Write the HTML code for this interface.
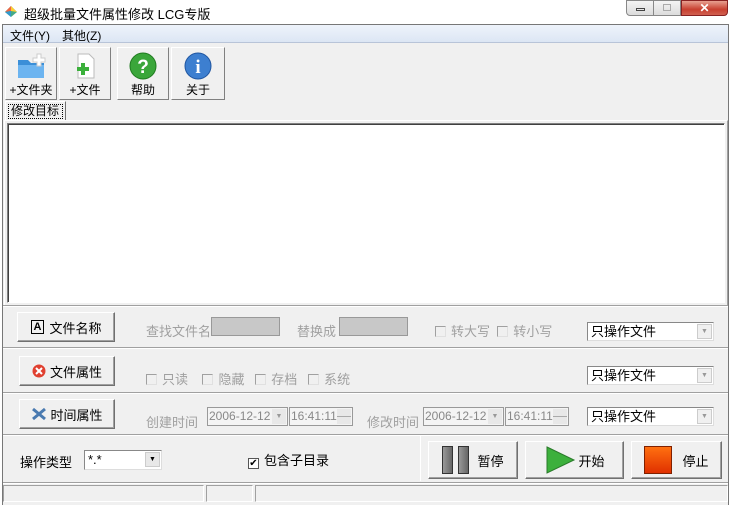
<!DOCTYPE html>
<html><head><meta charset="utf-8"><style>
*{margin:0;padding:0;box-sizing:border-box}
body{width:731px;height:505px;overflow:hidden;background:#fff;font-family:"Liberation Sans","Noto Sans CJK SC",sans-serif;font-size:12px;color:#000;position:relative}
.a{position:absolute;white-space:nowrap}
.btn{position:absolute;background:#f0f0f0;border:1px solid;border-color:#fff #707070 #707070 #fff;box-shadow:inset -1px -1px 0 #a0a0a0;display:flex;align-items:center;justify-content:center;font-size:13px;white-space:nowrap}
.g{color:#a0a0a0;font-size:13px}
.sep{position:absolute;left:3px;width:725px;height:2px;border-top:1px solid #a0a0a0;border-bottom:1px solid #fff}
.cb{display:inline-block;width:11px;height:11px;border:1px solid #a0a0a0;border-right-color:#e0e0e0;border-bottom-color:#e0e0e0;vertical-align:-1px;margin-right:5px;background:#f0f0f0}
.combo{position:absolute;height:19px;background:#fff;border:1px solid #888;border-right-color:#ddd;border-bottom-color:#ddd;font-size:13px;padding-left:3px;line-height:17px;white-space:nowrap}
.combo .dd{position:absolute;right:1px;top:1px;width:15px;height:15px;background:#f0f0f0;border:1px solid #ccc;font-size:7px;line-height:13px;text-align:center;color:#999}
.inp{position:absolute;height:19px;border:1px solid #999;background:#f4f4f4;font-size:12px;color:#888;line-height:17px;padding-left:1px;white-space:nowrap}
.tb{position:absolute;top:47px;height:53px;background:#f0f0f0;border:1px solid;border-color:#fff #808080 #808080 #fff;text-align:center;font-size:12px}
</style></head><body>
<div class="a" style="left:0;top:0;width:731px;height:25px;background:#fff"></div>
<svg class="a" style="left:3px;top:3px" width="16" height="16"><path d="M2 9 L8 3 L14 9 L8 14Z" fill="#4a8"/><path d="M2 9 L8 3 L8 8Z" fill="#e64"/><path d="M8 3 L14 9 L8 8Z" fill="#fc3"/><path d="M2 9 L8 14 L8 8Z" fill="#39c"/></svg>
<div class="a" style="left:24px;top:4px;font-size:13px">超级批量文件属性修改 LCG专版</div>
<div class="a" style="left:626px;top:0;width:28px;height:16px;border:1px solid #888;border-radius:0 0 0 4px;background:linear-gradient(#f4f4f4,#dcdcdc)"><div class="a" style="left:9px;top:7px;width:9px;height:3px;border:1px solid #444"></div></div>
<div class="a" style="left:654px;top:0;width:27px;height:16px;border:1px solid #888;border-left:none;background:linear-gradient(#f4f4f4,#dcdcdc)"><div class="a" style="left:9px;top:3px;width:8px;height:7px;border:1px solid #aaa"></div></div>
<div class="a" style="left:681px;top:0;width:47px;height:16px;border:1px solid #822;border-radius:0 0 4px 0;background:linear-gradient(#e8a090,#c84030 60%,#d06050);color:#fff;text-align:center;font-weight:bold;font-size:12px;line-height:14px">✕</div>
<div class="a" style="left:2px;top:24px;width:727px;height:481px;background:#f0f0f0;border:1px solid #777;border-bottom:none"></div>
<div class="a" style="left:3px;top:25px;width:725px;height:18px;background:linear-gradient(#eef3fb,#dce6f4);border-bottom:1px solid #b8c4d8"></div>
<div class="a" style="left:10px;top:27px;font-size:12px">文件(Y)</div>
<div class="a" style="left:62px;top:27px;font-size:12px">其他(Z)</div>
<div class="tb" style="left:5px;width:52px"><svg style="margin-top:4px" width="32" height="28"><path d="M3 8 h10 l3 3 h13 v15 h-26z" fill="#3b8fd8"/><path d="M3 13 h26 v13 h-26z" fill="#6cb4f0"/><path d="M22 2 h4 v4 h4 v4 h-4 v4 h-4 v-4 h-4 v-4 h4z" fill="#fff" stroke="#ccc"/></svg><div style="margin-top:-2px">+文件夹</div></div>
<div class="tb" style="left:59px;width:52px"><svg style="margin-top:4px" width="32" height="28"><path d="M9 2 h11 l5 5 v19 h-16z" fill="#fff" stroke="#bbb"/><path d="M12 11 h4 v4 h4 v4 h-4 v4 h-4 v-4 h-4 v-4 h4z" fill="#3bb03b"/></svg><div style="margin-top:-2px">+文件</div></div>
<div class="tb" style="left:117px;width:52px"><svg style="margin-top:4px" width="32" height="28"><circle cx="16" cy="14" r="13" fill="#3aa63a" stroke="#1f7a1f"/><text x="16" y="21" font-size="19" font-weight="bold" fill="#fff" text-anchor="middle" font-family="Liberation Sans">?</text></svg><div style="margin-top:-2px">帮助</div></div>
<div class="tb" style="left:171px;width:54px"><svg style="margin-top:4px" width="32" height="28"><circle cx="16" cy="14" r="13" fill="#3d7fd0" stroke="#1f55a0"/><text x="16" y="21" font-size="19" font-weight="bold" fill="#fff" text-anchor="middle" font-family="Liberation Serif">i</text></svg><div style="margin-top:-2px">关于</div></div>
<div class="a" style="left:5px;top:101px;width:61px;height:20px;border:1px solid;border-color:#fff #707070 #f0f0f0 #fff;background:#f0f0f0"><div style="margin:2px 2px;border:1px dotted #000;font-size:12px;line-height:13px;padding:0 2px;white-space:nowrap;overflow:hidden">修改目标</div></div>
<div class="a" style="left:4px;top:120px;width:724px;height:186px;border:1px solid;border-color:#fff #a0a0a0 #a0a0a0 #fff"></div>
<div class="a" style="left:7px;top:123px;width:718px;height:180px;background:#fff;border:1px solid;border-color:#808080 #fff #fff #808080;box-shadow:inset 1px 1px 0 #404040"></div>
<div class="sep" style="top:305px"></div>
<div class="btn" style="left:17px;top:312px;width:98px;height:30px"><span style="border:1px solid #000;font-weight:bold;font-size:11px;padding:0 2px;margin-right:5px;line-height:12px">A</span>文件名称</div>
<div class="a g" style="left:146px;top:321px">查找文件名</div>
<div class="inp" style="left:211px;top:317px;width:69px;background:#c8c8c8"></div>
<div class="a g" style="left:297px;top:321px">替换成</div>
<div class="inp" style="left:339px;top:317px;width:69px;background:#c8c8c8"></div>
<div class="a g" style="left:435px;top:321px"><span class="cb"></span>转大写 &nbsp;<span class="cb"></span>转小写</div>
<div class="combo" style="left:587px;top:322px;width:127px">只操作文件<div class="dd">▼</div></div>
<div class="sep" style="top:347px"></div>
<div class="btn" style="left:19px;top:356px;width:96px;height:30px"><svg width="14" height="14" style="margin-right:4px"><circle cx="7" cy="7" r="6.5" fill="#e04030"/><path d="M4 4 L10 10 M10 4 L4 10" stroke="#fff" stroke-width="2"/></svg>文件属性</div>
<div class="a g" style="left:146px;top:369px"><span class="cb"></span>只读 &nbsp;&nbsp;&nbsp;<span class="cb"></span>隐藏 &nbsp;&nbsp;<span class="cb"></span>存档 &nbsp;&nbsp;<span class="cb"></span>系统</div>
<div class="combo" style="left:587px;top:366px;width:127px">只操作文件<div class="dd">▼</div></div>
<div class="sep" style="top:392px"></div>
<div class="btn" style="left:19px;top:399px;width:96px;height:30px"><svg width="16" height="14" style="margin-right:3px"><path d="M2 2 L14 12 M2 12 L14 2" stroke="#4a7ab0" stroke-width="3"/></svg>时间属性</div>
<div class="a g" style="left:146px;top:412px">创建时间</div>
<div class="inp" style="left:207px;top:407px;width:81px">2006-12-12<div class="a" style="right:1px;top:1px;width:14px;height:15px;background:#e8e8e8;font-size:7px;text-align:center;line-height:15px;color:#999">▼</div></div>
<div class="inp" style="left:289px;top:407px;width:64px">16:41:11<div class="a" style="right:1px;top:1px;width:14px;height:15px;background:#e8e8e8;border-top:7px solid #e8e8e8;border-bottom:7px solid #e8e8e8"><div style="border-top:1px solid #aaa"></div></div></div>
<div class="a g" style="left:367px;top:412px">修改时间</div>
<div class="inp" style="left:423px;top:407px;width:81px">2006-12-12<div class="a" style="right:1px;top:1px;width:14px;height:15px;background:#e8e8e8;font-size:7px;text-align:center;line-height:15px;color:#999">▼</div></div>
<div class="inp" style="left:505px;top:407px;width:64px">16:41:11<div class="a" style="right:1px;top:1px;width:14px;height:15px;background:#e8e8e8;border-top:7px solid #e8e8e8;border-bottom:7px solid #e8e8e8"><div style="border-top:1px solid #aaa"></div></div></div>
<div class="combo" style="left:587px;top:407px;width:127px">只操作文件<div class="dd">▼</div></div>
<div class="sep" style="top:434px"></div>
<div class="a" style="left:20px;top:452px;font-size:13px">操作类型</div>
<div class="combo" style="left:84px;top:450px;width:78px;height:20px">*.*<div class="dd" style="color:#000;background:#e8e8e8">▼</div></div>
<div class="a" style="left:248px;top:450px;font-size:13px"><span class="cb" style="border-color:#555;background:#fff;font-size:10px;line-height:9px;text-align:center">✔</span>包含子目录</div>
<div class="a" style="left:420px;top:435px;width:1px;height:46px;background:#a0a0a0;border-right:1px solid #fff"></div>
<div class="btn" style="left:428px;top:441px;width:90px;height:38px;font-size:13px"><div style="width:11px;height:28px;background:linear-gradient(90deg,#999,#666);border:1px solid #333;margin-right:5px"></div><div style="width:11px;height:28px;background:linear-gradient(90deg,#999,#666);border:1px solid #333;margin-right:8px"></div>暂停</div>
<div class="btn" style="left:525px;top:441px;width:99px;height:38px;font-size:13px"><svg width="32" height="30" style="margin-right:2px"><path d="M3 2 L30 15 L3 28Z" fill="#3cb03c" stroke="#2a7a2a"/></svg>开始</div>
<div class="btn" style="left:631px;top:441px;width:91px;height:38px;font-size:13px"><div style="width:28px;height:28px;background:linear-gradient(#ff7010,#e03000);border:1px solid #802000;margin-right:10px"></div>停止</div>
<div class="sep" style="top:482px"></div>
<div class="a" style="left:3px;top:485px;width:201px;height:17px;border:1px solid;border-color:#a0a0a0 #fff #fff #a0a0a0"></div>
<div class="a" style="left:206px;top:485px;width:47px;height:17px;border:1px solid;border-color:#a0a0a0 #fff #fff #a0a0a0"></div>
<div class="a" style="left:255px;top:485px;width:473px;height:17px;border:1px solid;border-color:#a0a0a0 #fff #fff #a0a0a0"></div>
</body></html>
